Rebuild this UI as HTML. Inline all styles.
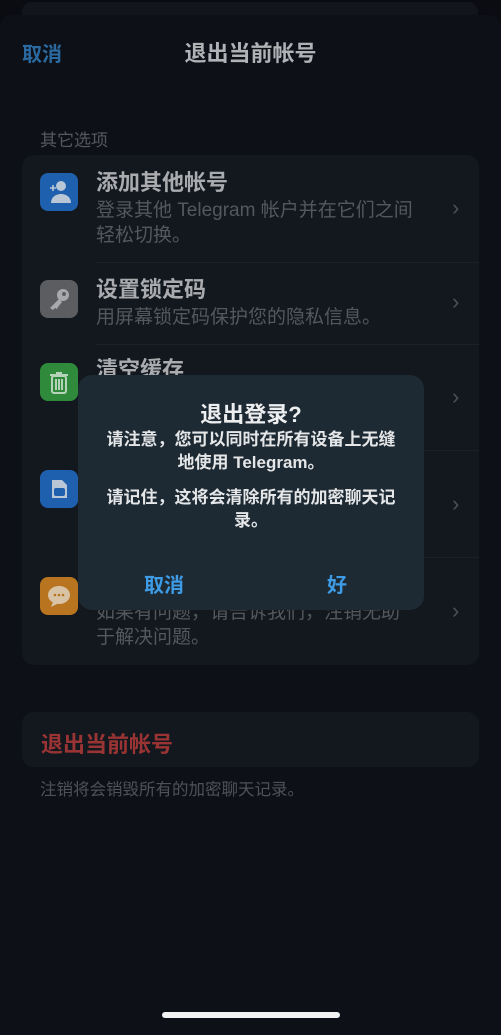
<!DOCTYPE html><html><head><meta charset="utf-8"><style>
*{margin:0;padding:0;box-sizing:border-box}
body{width:501px;height:1024px;background:#0a0c11;position:relative;overflow:hidden;font-family:"Liberation Sans","Noto Sans CJK SC",sans-serif}
.a{position:absolute;white-space:nowrap}
.sheet{position:absolute;left:0;top:15px;width:501px;height:1020px;background:#0d1117;border-radius:12px 12px 0 0}
.back{position:absolute;left:22px;top:2px;width:456px;height:20px;background:#12161c;border-radius:10px}
.card{position:absolute;left:22px;background:#12181e;border-radius:12px}
.ic{position:absolute;left:40px;width:38px;height:38px;border-radius:8px}
.t{font-size:22px;color:#a9abae;font-weight:bold;line-height:26px}
.s{font-size:19px;color:#54585d;line-height:25px}
.sep{position:absolute;left:96px;right:22px;height:1px;background:#1b2127}
.ch{position:absolute;left:452px;color:#4c5055;font-size:22px}
</style></head><body>
<div class="back"></div>
<div class="sheet"></div>
<div class="a" style="left:22px;top:38px;font-size:20px;color:#2a6aa0;font-weight:bold">取消</div>
<div class="a" style="left:0;width:501px;text-align:center;top:36px;font-size:22px;color:#b0b2b5;font-weight:bold">退出当前帐号</div>
<div class="a" style="left:40px;top:126px;font-size:17px;color:#55595e">其它选项</div>
<div class="card" style="top:155px;width:457px;height:510px"></div>
<div class="ic" style="top:173px;background:#1e5fae"><svg width="38" height="38" viewBox="0 0 38 38"><circle cx="21" cy="13" r="5" fill="#b9c6d6"/><path d="M11 30c0-6 5-9 10-9s10 3 10 9z" fill="#b9c6d6"/><path d="M10 15h6M13 12v6" stroke="#b9c6d6" stroke-width="1.6"/></svg></div>
<div class="a t" style="left:96px;top:170px">添加其他帐号</div>
<div class="a s" style="left:96px;top:198px">登录其他 Telegram 帐户并在它们之间<br>轻松切换。</div>
<div class="ch" style="top:195px">›</div>
<div class="sep" style="top:262px"></div>
<div class="ic" style="top:280px;background:#5b5d60"><svg width="38" height="38" viewBox="0 0 38 38"><circle cx="23" cy="15" r="6" fill="#a8a9ab"/><circle cx="24" cy="14" r="2" fill="#5b5d60"/><path d="M19 19l-9 9 3 2 2-2 2 1 1-2 4-5z" fill="#a8a9ab"/></svg></div>
<div class="a t" style="left:96px;top:277px">设置锁定码</div>
<div class="a s" style="left:96px;top:305px">用屏幕锁定码保护您的隐私信息。</div>
<div class="ch" style="top:289px">›</div>
<div class="sep" style="top:344px"></div>
<div class="ic" style="top:363px;background:#2f8a3c"><svg width="38" height="38" viewBox="0 0 38 38"><rect x="12" y="13" width="14" height="17" rx="2" fill="none" stroke="#b6d3ba" stroke-width="2"/><path d="M10 12h18M16 10h6M16 16v11M19 16v11M22 16v11" stroke="#b6d3ba" stroke-width="2"/></svg></div>
<div class="a t" style="left:96px;top:357px">清空缓存</div>
<div class="ch" style="top:384px">›</div>
<div class="sep" style="top:450px"></div>
<div class="ic" style="top:470px;background:#1e5fae"><svg width="38" height="38" viewBox="0 0 38 38"><path d="M12 10h10l5 5v13H12z" fill="#b9c6d6"/><rect x="14" y="18" width="11" height="8" rx="2" fill="#1e5fae"/></svg></div>
<div class="ch" style="top:491px">›</div>
<div class="sep" style="top:557px"></div>
<div class="ic" style="top:577px;background:#b8741e"><svg width="38" height="38" viewBox="0 0 38 38"><ellipse cx="19" cy="18" rx="11" ry="9" fill="#d9c3a6"/><path d="M13 25l-2 5 6-3z" fill="#d9c3a6"/><circle cx="15" cy="18" r="1.3" fill="#b8741e"/><circle cx="19" cy="18" r="1.3" fill="#b8741e"/><circle cx="23" cy="18" r="1.3" fill="#b8741e"/></svg></div>
<div class="a s" style="left:96px;top:600px">如果有问题，请告诉我们，注销无助<br>于解决问题。</div>
<div class="ch" style="top:598px">›</div>
<div style="position:absolute;left:78px;top:375px;width:346px;height:235px;background:#1e2a33;border-radius:14px"></div>
<div class="a" style="left:78px;width:346px;text-align:center;top:397px;font-size:22px;color:#eceef0;font-weight:bold">退出登录?</div>
<div class="a" style="left:78px;width:346px;text-align:center;top:429px;font-size:17px;line-height:22.5px;color:#e4e6e8;font-weight:bold">请注意，您可以同时在所有设备上无缝<br>地使用 Telegram。<br><span style="display:block;height:13px"></span>请记住，这将会清除所有的加密聊天记<br>录。</div>
<div class="a" style="left:78px;width:172px;text-align:center;top:569px;font-size:20px;color:#3e9be6;font-weight:bold">取消</div>
<div class="a" style="left:250px;width:174px;text-align:center;top:569px;font-size:20px;color:#3e9be6;font-weight:bold">好</div>
<div class="card" style="top:712px;width:457px;height:55px"></div>
<div class="a" style="left:41px;top:727px;font-size:22px;color:#9a3434;font-weight:bold">退出当前帐号</div>
<div class="a" style="left:40px;top:776px;font-size:16.5px;color:#4e5257">注销将会销毁所有的加密聊天记录。</div>
<div style="position:absolute;left:162px;top:1012px;width:178px;height:6px;border-radius:3px;background:#f2f2f2"></div>
</body></html>
